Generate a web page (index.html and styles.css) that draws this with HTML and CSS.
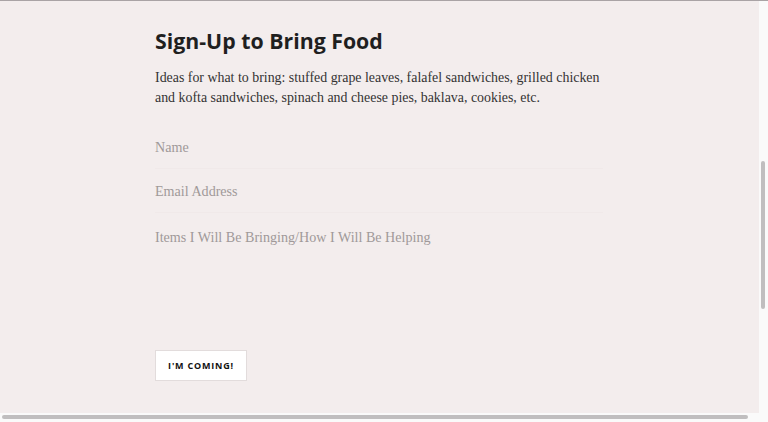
FILE: index.html
```html
<!DOCTYPE html>
<html>
<head>
<meta charset="utf-8">
<link rel="stylesheet" href="styles.css">
</head>
<body>
<div class="viewport">
  <main class="content">
    <h1 class="title">Sign-Up to Bring Food</h1>
    <p class="intro">Ideas for what to bring: stuffed grape leaves, falafel sandwiches, grilled chicken and kofta sandwiches, spinach and cheese pies, baklava, cookies, etc.</p>
    <form class="form">
      <input class="field" type="text" placeholder="Name">
      <input class="field" type="email" placeholder="Email Address">
      <textarea class="field area" placeholder="Items I Will Be Bringing/How I Will Be Helping"></textarea>
      <button class="submit" type="button">I'M COMING!</button>
    </form>
  </main>
  <div class="vscroll"><div class="vthumb"></div></div>
  <div class="hscroll"><div class="hthumb"></div></div>
</div>
</body>
</html>
```

FILE: styles.css
```css
html, body {
  margin: 0;
  padding: 0;
  height: 100%;
  overflow: hidden;
}
body {
  background: #fafafa;
}
.viewport {
  position: relative;
  width: 768px;
  height: 422px;
  box-sizing: border-box;
  border-top: 1px solid #a9a3a5;
}
.content {
  width: 759px;
  height: 412px;
  background: #f3eded;
  box-sizing: border-box;
  padding: 26px 0 0 155px;
  overflow: hidden;
}
.title {
  margin: 0;
  font-family: "Open Sans", sans-serif;
  font-weight: 700;
  font-size: 21.3px;
  line-height: 28px;
  color: #1f1f1f;
}
.intro {
  margin: 13px 0 0;
  width: 448px;
  font-family: "Liberation Serif", serif;
  font-size: 13.9px;
  line-height: 19.5px;
  color: #333;
}
.form {
  display: flex;
  flex-direction: column;
  align-items: flex-start;
  width: 448px;
  margin-top: 18px;
}
.field {
  width: 448px;
  box-sizing: border-box;
  border: none;
  border-bottom: 1px solid #f0e9e9;
  background: transparent;
  font-family: "Liberation Serif", serif;
  font-size: 14.1px;
  color: #333;
  padding: 12px 0 10px;
  height: 44px;
  outline: none;
  resize: none;
}
.field::placeholder {
  color: #a09999;
  opacity: 1;
}
.area {
  height: 120px;
  padding-top: 16px;
  border-bottom: none;
}
.submit {
  margin-top: 17px;
  width: 92px;
  height: 31px;
  background: #fff;
  border: 1px solid #e2dcdc;
  font-family: "Open Sans", sans-serif;
  font-weight: 700;
  font-size: 9px;
  letter-spacing: 0.8px;
  color: #111;
  padding: 0;
}
.vscroll {
  position: absolute;
  top: 0;
  right: 0;
  width: 9px;
  height: 421px;
  background: #fafafa;
}
.vthumb {
  position: absolute;
  left: 2px;
  top: 160px;
  width: 4px;
  height: 148px;
  border-radius: 2px;
  background: #c0bebf;
}
.hscroll {
  position: absolute;
  left: 0;
  bottom: 0;
  width: 759px;
  height: 9px;
  background: #fafafa;
}
.hthumb {
  position: absolute;
  left: 2px;
  top: 2px;
  width: 746px;
  height: 4px;
  border-radius: 2px;
  background: #c0bebf;
}
```
